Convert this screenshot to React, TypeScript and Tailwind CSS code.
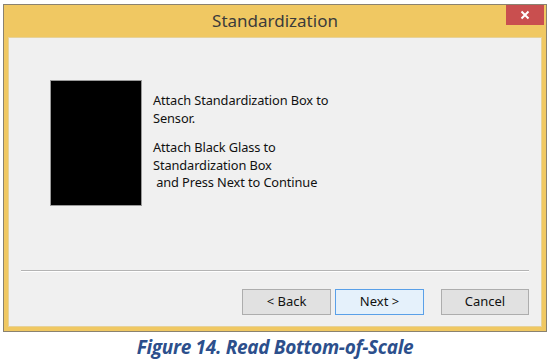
export default function App() {
  return (
    <div className="w-[550px] h-[361px] bg-white font-['Noto_Sans',sans-serif] overflow-hidden">
      <div className="ml-[3px] pt-[4px]">
        <div className="w-[544px] h-[328px] border border-[#8a8270] bg-[#f0c862] flex flex-col">
          <div className="h-[32px] relative flex items-center justify-center">
            <span className="text-[17px] text-[#3b3b3b] leading-none -mt-[2px]">Standardization</span>
            <div className="absolute right-[2px] top-0 w-[38px] h-[20px] bg-[#c94f4f] flex items-center justify-center">
              <svg width="10" height="10" viewBox="0 0 10 10">
                <path d="M1.5 1.5 L8.5 8.5 M8.5 1.5 L1.5 8.5" stroke="#ffffff" strokeWidth="2" />
              </svg>
            </div>
          </div>
          <div className="mx-[4px] mb-[4px] flex-1 bg-[#f0f0f0] border border-[#e6d29a] flex flex-col">
            <div className="flex pl-[41px] pt-[42px]">
              <div className="w-[92px] h-[126px] bg-black border border-[#9a9a9a]" />
              <div className="ml-[11px] mt-[12px] text-[12.8px] leading-[17.5px] text-[#111] tracking-[-0.1px]">
                <p>Attach Standardization Box to</p>
                <p>Sensor.</p>
                <p className="mt-[12px]">Attach Black Glass to</p>
                <p>Standardization Box</p>
                <p>&nbsp;and Press Next to Continue</p>
              </div>
            </div>
            <div className="mt-auto mx-[12px] border-t border-[#b4b4b4] border-b-white border-b h-0" />
            <div className="flex justify-end gap-[4px] mt-[17px] mb-[11px] mr-[12px] text-[13px] text-[#111]">
              <button className="w-[89px] h-[26px] bg-[#e1e1e1] border border-[#adadad]">&lt; Back</button>
              <button className="w-[89px] h-[26px] bg-[#e5f1fb] border border-[#5aa0e8]">Next &gt;</button>
              <button className="w-[88px] h-[26px] ml-[13px] bg-[#e1e1e1] border border-[#adadad]">Cancel</button>
            </div>
          </div>
        </div>
      </div>
      <p className="text-center mt-[2px] text-[19px] leading-[27px] font-bold italic text-[#2c4f8c] font-['Open_Sans',sans-serif] tracking-[-0.3px]">
        Figure 14. Read Bottom-of-Scale
      </p>
    </div>
  );
}
